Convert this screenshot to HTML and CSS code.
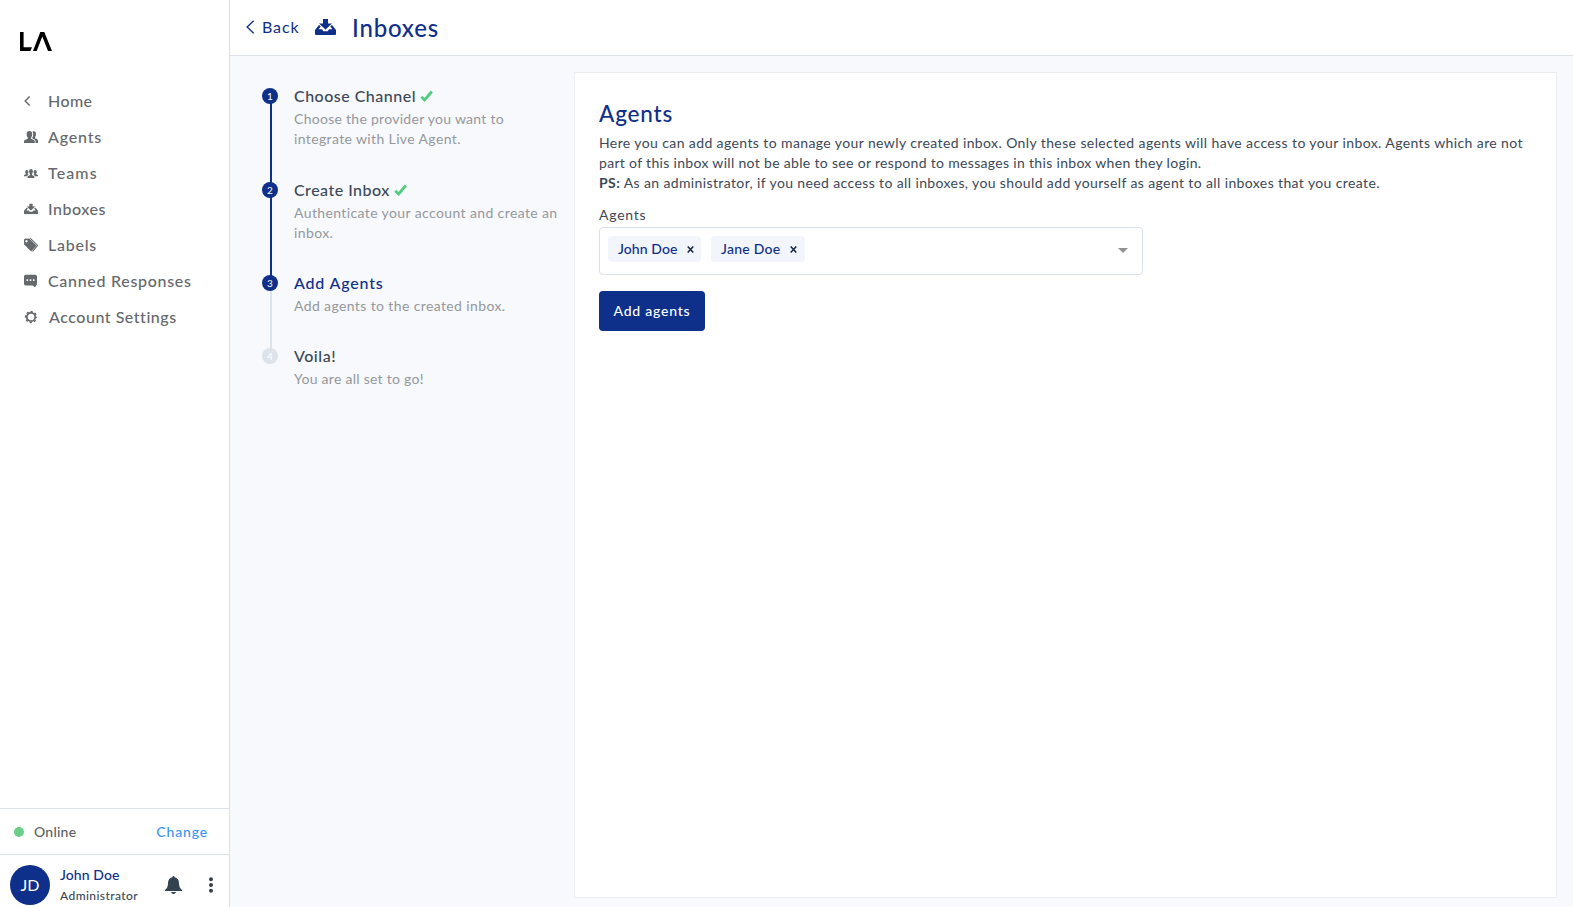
FILE: index.html
```
<!DOCTYPE html>
<html lang="en">
<head>
<meta charset="utf-8">
<title>Inboxes</title>
<link rel="stylesheet" href="styles.css">
</head>
<body>
<svg class="sprite" aria-hidden="true">
  <symbol id="inbox" viewBox="0 0 21 16">
    <path d="M8 0h5v4.500h4L10.500 10.500 4 4.500h4z"/>
    <path fill-rule="evenodd" d="M3.800 6.200h.7L5.700 7.400 3.600 10.300h3.300l1.500 2h4.200l1.500-2h3.300L15.300 7.400l1.200-1.200h.7L21 11v4q0 1-1 1H1q-1 0-1-1v-4z"/>
  </symbol>
  <symbol id="check" viewBox="0 0 13 12">
    <path d="M1.300 6.800 4.600 10 11.800 1.500" fill="none" stroke="currentColor" stroke-width="2.800"/>
  </symbol>
</svg>
<div class="app">
  <aside class="sidebar">
    <svg class="logo" width="32" height="19" viewBox="0 0 32 19"><path d="M0 0h3.600v15.300H12L10.300 19H0zM13 19 20.300 0h4L32 19h-4L22.300 4.600 16.700 19z"/></svg>
    <nav class="nav">
      <a class="nav-item"><svg class="nav-icon" viewBox="0 0 14 14"><path d="M5.600 2.600 1.200 7l4.400 4.400" fill="none" stroke="currentColor" stroke-width="1.400"/></svg><span class="t-home">Home</span></a>
      <a class="nav-item"><svg class="nav-icon" viewBox="0 0 14 14"><path d="M0 13v-1.600q0-1 1-1.400l2.700-1.200V7.500Q2.600 6.400 2.600 4.200 2.600 1 5.400 1t2.800 3.200q0 2.200-1.100 3.300v1.300L9.800 10q1 .4 1 1.400V13z"/><path d="M8.500 1.600q.6-.4 1.300-.4 2.200 0 2.200 2.900 0 1.900-.9 2.900v1.300l2 1q.9.400.9 1.500V13h-2.500v-2q0-1-1-1.500L8.200 8.300V7.800q1-1.300 1-3.400 0-1.700-.7-2.800z"/></svg><span class="t-agents">Agents</span></a>
      <a class="nav-item"><svg class="nav-icon" viewBox="0 0 14 14"><path d="M3.500 12v-1.200q0-.6.600-.9L6 9V8q-.9-.9-.9-2.600Q5.100 3 7 3t1.900 2.400Q8.900 7.100 8 8v1l1.900.9q.6.300.6.900V12z"/><path d="M0 10.300v-.8q0-.5.500-.7l1.300-.6v-.7q-.6-.7-.6-1.700Q1.200 4 2.800 4t1.600 1.800q0 1-.6 1.700v.7l.8.500q-1.600.6-1.600 1.600zM14 10.300v-.8q0-.5-.5-.7l-1.300-.6v-.7q.6-.7.6-1.700Q12.800 4 11.200 4T9.600 5.800q0 1 .6 1.700v.7l-.8.500q1.600.6 1.600 1.600z"/></svg><span class="t-teams">Teams</span></a>
      <a class="nav-item"><svg class="nav-icon" viewBox="0 0 14 14"><use href="#inbox" y="1.500" width="14" height="10.700"/></svg><span class="t-inboxes">Inboxes</span></a>
      <a class="nav-item"><svg class="nav-icon" viewBox="0 0 14 14"><path fill-rule="evenodd" d="M0 1.800Q0 .8 1 .8L5.600.6l7 6.800-5.400 6L.1 6.600zM2.500 2a1.200 1.200 0 1 0 .01 0z"/><path d="M6.300.5 13.500 7.500 8.500 13.300" fill="none" stroke="currentColor" stroke-width="1.100"/><path d="M5.800 1 12.800 7.700" fill="none" stroke="#fff" stroke-width=".5"/></svg><span class="t-labels">Labels</span></a>
      <a class="nav-item"><svg class="nav-icon" viewBox="0 0 14 14"><path fill-rule="evenodd" d="M1.800.8h9.400Q13 .8 13 2.600v7.200q0 1.200-.8 1.600L11 13.300l-2.500-1.800H1.800Q0 11.500 0 9.700V2.600Q0 .8 1.800.8zM2.500 5.300v1.600h1.600V5.300zm3.200 0v1.600h1.600V5.300zm3.200 0v1.600h1.600V5.300z"/></svg><span class="t-canned">Canned Responses</span></a>
      <a class="nav-item nav-settings"><svg class="nav-icon" viewBox="0 0 14 14"><circle cx="7" cy="7" r="4.200" fill="none" stroke="currentColor" stroke-width="1.700"/><circle cx="7" cy="7" r="5.400" fill="none" stroke="currentColor" stroke-width="1.500" stroke-dasharray="2.240 2" stroke-dashoffset="1.120"/></svg><span class="t-settings">Account Settings</span></a>
    </nav>
    <div class="status">
      <span class="status-dot"></span>
      <span class="status-name">Online</span>
      <a class="status-change">Change</a>
    </div>
    <div class="user">
      <div class="avatar">JD</div>
      <div class="user-text">
        <div class="user-name">John Doe</div>
        <div class="user-role">Administrator</div>
      </div>
      <svg class="bell" width="17" height="18" viewBox="0 0 17 18"><path d="M8.500 0Q9.600 0 9.600 1.300 14 2.300 14 7.300q0 4.700 3 6.700v1H0v-1q3-2 3-6.700 0-5 4.400-6Q7.400 0 8.500 0zM6 16h5q-.6 2-2.500 2T6 16z"/></svg>
      <svg class="dots" width="4" height="16" viewBox="0 0 4 16"><circle cx="2" cy="2.200" r="2"/><circle cx="2" cy="8" r="2"/><circle cx="2" cy="13.800" r="2"/></svg>
    </div>
  </aside>
  <div class="page">
    <header class="topbar">
      <svg class="back-icon" width="9" height="14" viewBox="0 0 9 14"><path d="M7.700.7 1.100 7l6.600 6.300" fill="none" stroke="currentColor" stroke-width="1.300"/></svg>
      <a class="back">Back</a>
      <svg class="title-icon" width="21" height="16"><use href="#inbox" width="21" height="16"/></svg>
      <h1 class="title">Inboxes</h1>
    </header>
    <div class="content">
      <ol class="steps">
        <li class="step done">
          <div class="rail"><span class="bullet">1</span></div>
          <div class="step-text"><h3 class="step-title s1">Choose Channel<svg class="check" width="13" height="12"><use href="#check" width="13" height="12"/></svg></h3><p class="step-desc d1">Choose the provider you want to<br><span class="d1b">integrate with Live Agent.</span></p></div>
        </li>
        <li class="step done">
          <div class="rail"><span class="bullet">2</span></div>
          <div class="step-text"><h3 class="step-title s2">Create Inbox<svg class="check" width="13" height="12"><use href="#check" width="13" height="12"/></svg></h3><p class="step-desc d2">Authenticate your account and create an<br>inbox.</p></div>
        </li>
        <li class="step active">
          <div class="rail"><span class="bullet">3</span></div>
          <div class="step-text"><h3 class="step-title s3">Add Agents</h3><p class="step-desc d3">Add agents to the created inbox.</p></div>
        </li>
        <li class="step">
          <div class="rail"><span class="bullet">4</span></div>
          <div class="step-text"><h3 class="step-title s4">Voila!</h3><p class="step-desc d4">You are all set to go!</p></div>
        </li>
      </ol>
      <main class="card">
        <h2 class="card-title">Agents</h2>
        <p class="card-copy"><span class="c1">Here you can add agents to manage your newly created inbox. Only these selected agents will have access to your inbox. Agents which are not</span><br><span class="c2">part of this inbox will not be able to see or respond to messages in this inbox when they login.</span><br><b>PS:</b><span class="c3"> As an administrator, if you need access to all inboxes, you should add yourself as agent to all inboxes that you create.</span></p>
        <label class="field-label">Agents</label>
        <div class="select">
          <span class="tag"><span class="tag-john">John Doe</span><svg class="tag-x" width="7" height="7" viewBox="0 0 7 7"><path d="M.7.500 6.300 6.500M6.300.500.700 6.500"/></svg></span>
          <span class="tag tag-second"><span class="tag-jane">Jane Doe</span><svg class="tag-x" width="7" height="7" viewBox="0 0 7 7"><path d="M.7.500 6.300 6.500M6.300.500.700 6.500"/></svg></span>
          <svg class="caret" width="10" height="5" viewBox="0 0 10 5"><path d="M0 0h10L5 5z"/></svg>
        </div>
        <button class="submit">Add agents</button>
      </main>
    </div>
  </div>
</div>
</body>
</html>
```
FILE: styles.css
```
* { box-sizing: border-box; }
body { margin: 0; font-family: Lato, "Open Sans", sans-serif; font-size: 14px; color: #3c4858; }
h1, h2, h3, p, ol { margin: 0; padding: 0; font-weight: 400; }
svg { display: block; flex: none; fill: currentColor; }
.sprite { width: 0; height: 0; position: absolute; }
.app { display: flex; width: 100%; height: 907px; overflow: hidden; }

.sidebar { width: 230px; flex: none; display: flex; flex-direction: column; background: #fff; border-right: 1px solid #dce0ea; }
.logo { margin: 32px 0 0 20px; color: #000; }
.nav { margin-top: 32px; padding-left: 24px; flex: 1; }
.nav-item { display: flex; align-items: center; height: 36px; gap: 10px; font-size: 16px; font-weight: 500; line-height: 20px; color: #65686c; white-space: nowrap; }
.nav-icon { width: 14px; height: 14px; }
.nav-settings { gap: 11px; }
.t-home { letter-spacing: .4px; }
.t-agents { letter-spacing: .82px; }
.t-teams { letter-spacing: 1.1px; }
.t-inboxes { letter-spacing: .55px; }
.t-labels { letter-spacing: .75px; }
.t-canned { letter-spacing: .7px; }
.t-settings { letter-spacing: .53px; }

.status { display: flex; align-items: center; height: 46px; padding: 0 21px 0 14px; border-top: 1px solid #dce0ea; }
.status-dot { width: 10px; height: 10px; border-radius: 50%; background: #68d088; }
.status-name { margin-left: 10px; letter-spacing: .23px; color: #5c5f63; font-weight: 500; }
.status-change { margin-left: auto; letter-spacing: .85px; color: #3c93f5; font-weight: 500; }
.user { display: flex; align-items: center; height: 53px; padding: 7px 0 0 10px; border-top: 1px solid #dce0ea; }
.avatar { width: 40px; height: 40px; flex: none; border-radius: 50%; background: #0e2f8a; color: #fff; font-size: 16px; line-height: 40px; text-align: center; }
.user-text { width: 105px; padding-left: 10px; font-weight: 500; }
.user-name { line-height: 20px; letter-spacing: .1px; color: #0e2f8a; }
.user-role { font-size: 12px; line-height: 20px; padding-top: 1px; margin-bottom: -1px; letter-spacing: .43px; }
.bell { margin-left: 10px; color: #34414f; }
.dots { margin-left: 27px; color: #34414f; }

.page { flex: 1; min-width: 0; display: flex; flex-direction: column; background: #f8f9fd; }
.topbar { display: flex; align-items: center; height: 56px; padding-left: 16px; background: #fff; border-bottom: 1px solid #dce0ea; color: #0e2f8a; }
.back-icon { margin-bottom: 1px; }
.back { margin-left: 7px; margin-bottom: 2px; width: 38px; font-size: 16px; letter-spacing: .9px; }
.title-icon { margin-left: 15px; margin-bottom: 1px; }
.title { margin-left: 16px; font-size: 24px; line-height: 32px; font-weight: 500; letter-spacing: .8px; padding-top: 1px; }

.content { flex: 1; display: flex; padding: 16px 16px 9px 32px; }
.steps { width: 312px; flex: none; list-style: none; padding-top: 14px; }
.step { display: flex; height: 94px; }
.step + .step { height: 93px; }
.steps .step.active { height: 73px; }
.rail { width: 16px; position: relative; padding-top: 2px; }
.rail::before { content: ""; position: absolute; left: 8px; top: 10px; width: 2px; height: 100%; background: #dde3ea; }
.done .rail::before { background: #0e2f8a; }
.step:last-child .rail::before { display: none; }
.bullet { position: relative; display: block; width: 16px; height: 16px; border-radius: 50%; background: #dde3ea; color: #fff; font-size: 10px; line-height: 16px; text-align: center; }
.done .bullet, .active .bullet { background: #0e2f8a; }
.step-text { padding-left: 16px; white-space: nowrap; }
.step-title { display: flex; align-items: center; height: 22px; font-size: 16px; font-weight: 500; line-height: 20px; padding-bottom: 2px; }
.check { margin-left: 4px; color: #50cc7c; }
.step-desc { line-height: 20px; padding-top: 1px; color: #95989c; }
.active .step-title { color: #0e2f8a; }
.s1 { letter-spacing: .49px; }
.s2 { letter-spacing: .48px; }
.s3 { letter-spacing: .82px; }
.s4 { letter-spacing: .53px; }
.d1 { letter-spacing: .28px; }
.d1b { letter-spacing: .37px; }
.d2 { letter-spacing: .385px; }
.d3 { letter-spacing: .38px; }
.d4 { letter-spacing: .27px; }

.card { flex: 1; min-width: 0; padding: 25px 24px 24px; background: #fff; border: 1px solid #ebeff5; }
.card-title { font-size: 22.5px; line-height: 32px; font-weight: 500; letter-spacing: .8px; color: #0e2f8a; }
.card-copy { padding-top: 3px; line-height: 20px; white-space: nowrap; }
.card-copy b { letter-spacing: .4px; }
.c1 { letter-spacing: .395px; }
.c2 { letter-spacing: .32px; }
.c3 { letter-spacing: .38px; }
.field-label { display: block; margin-top: 13px; line-height: 18px; letter-spacing: .75px; }
.select { display: flex; align-items: flex-start; width: 544px; height: 48px; margin-top: 3px; padding: 8px; border: 1px solid #dbe1ec; border-radius: 4px; }
.tag { display: flex; align-items: center; width: 93px; height: 26px; padding: 0 7px 0 10px; border-radius: 4px; background: #f2f5fb; color: #0e2f8a; font-weight: 500; line-height: 20px; }
.tag-john, .tag-jane { padding-bottom: 1px; }
.tag-second { width: 94px; margin-left: 10px; padding-right: 8px; }
.tag-john { letter-spacing: .1px; }
.tag-jane { letter-spacing: .27px; }
.tag-x { margin-left: auto; fill: none; stroke: #16243f; stroke-width: 1.5; }
.caret { margin: 12px 6px 0 auto; color: #929292; }
.submit { display: block; width: 106px; height: 40px; margin-top: 16px; padding: 0 0 2px; border: 0; border-radius: 4px; background: #0e2f8a; color: #fff; font: 500 14px Lato, sans-serif; letter-spacing: .78px; }
```
